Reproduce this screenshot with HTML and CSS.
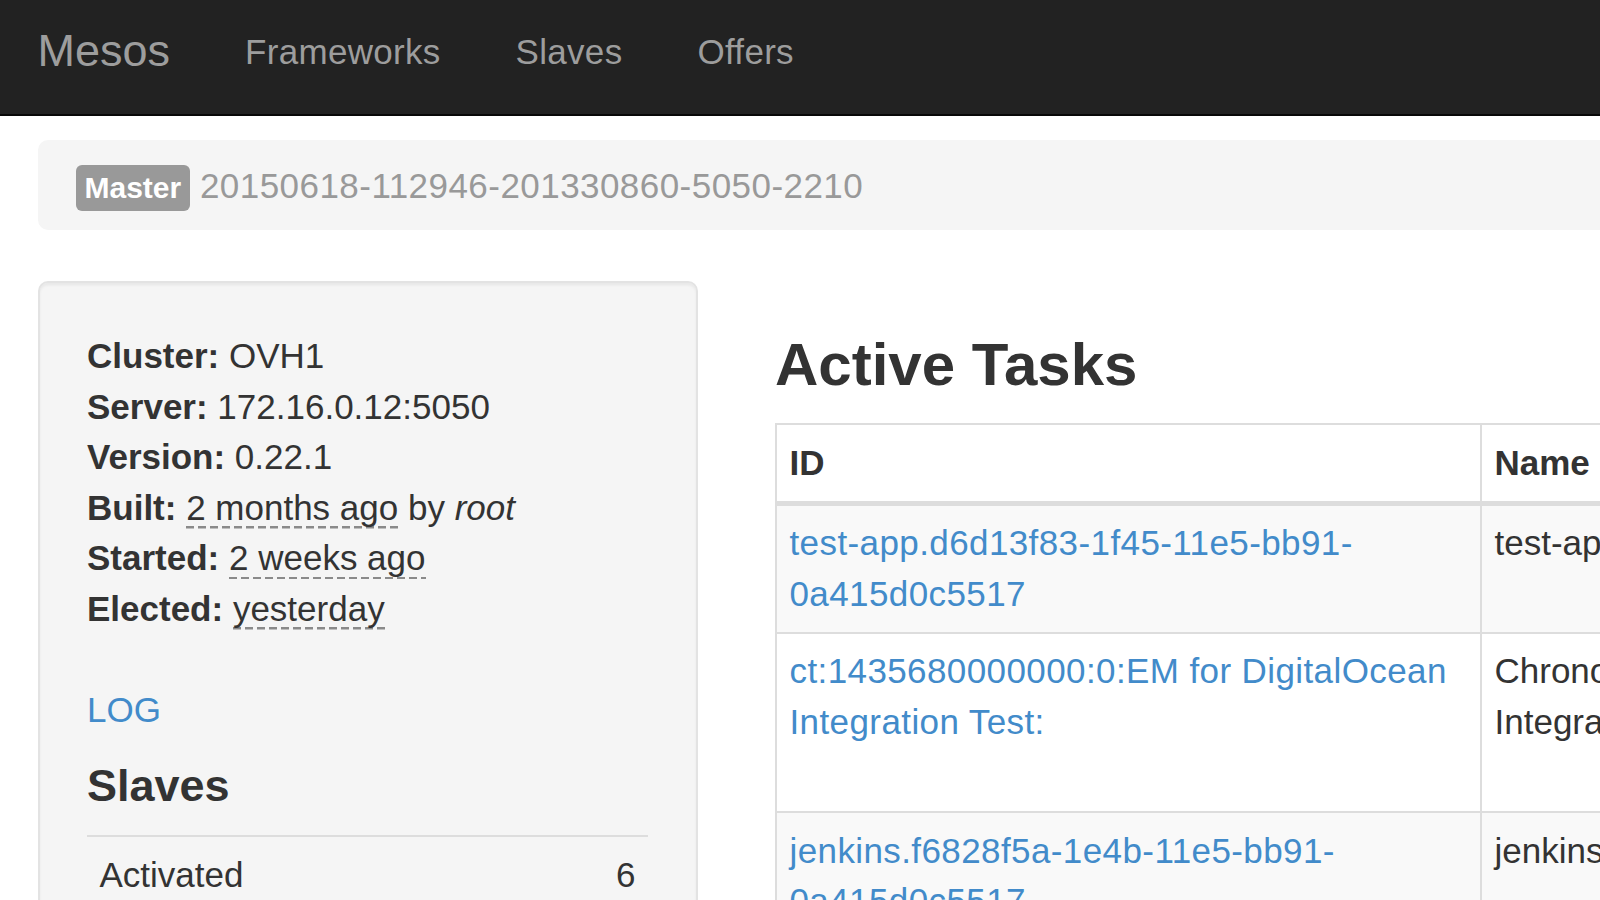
FILE: index.html
```html
<!DOCTYPE html>
<html>
<head>
<meta charset="utf-8">
<title>Mesos</title>
<link rel="stylesheet" href="styles.css">
</head>
<body>
<nav class="navbar">
  <a class="brand" href="#">Mesos</a>
  <ul class="nav">
    <li><a href="#">Frameworks</a></li>
    <li><a href="#">Slaves</a></li>
    <li><a href="#">Offers</a></li>
  </ul>
</nav>
<div class="page">
  <div class="breadcrumb">
    <span class="label">Master</span> <span class="crumb-id">20150618-112946-201330860-5050-2210</span>
  </div>
  <div class="row">
    <div class="side">
      <div class="well">
        <div class="info">
          <div class="info-row"><strong>Cluster:</strong> OVH1</div>
          <div class="info-row"><strong>Server:</strong> 172.16.0.12:5050</div>
          <div class="info-row"><strong>Version:</strong> 0.22.1</div>
          <div class="info-row"><strong>Built:</strong> <abbr class="dash">2 months ago</abbr> by <em>root</em></div>
          <div class="info-row"><strong>Started:</strong> <abbr class="dash">2 weeks ago</abbr></div>
          <div class="info-row"><strong>Elected:</strong> <abbr class="dash">yesterday</abbr></div>
        </div>
        <p class="log"><a href="#">LOG</a></p>
        <h4 class="side-title">Slaves</h4>
        <table class="mini-table">
          <tbody>
            <tr><td>Activated</td><td class="num">6</td></tr>
            <tr><td>Deactivated</td><td class="num">0</td></tr>
          </tbody>
        </table>
      </div>
    </div>
    <div class="main">
      <h3 class="title">Active Tasks</h3>
      <table class="tasks">
        <thead>
          <tr><th class="col-id">ID</th><th class="col-name">Name</th><th>State</th><th>Started</th><th>Host</th></tr>
        </thead>
        <tbody>
          <tr>
            <td><a class="task-link" href="#">test-app.d6d13f83-1f45-11e5-bb91-<wbr>0a415d0c5517</a></td>
            <td>test-app</td><td>RUNNING</td><td>2 weeks ago</td><td>slave-1</td>
          </tr>
          <tr class="tall">
            <td><a class="task-link" href="#">ct:1435680000000:0:EM for DigitalOcean Integration Test:</a></td>
            <td>ChronosTask:EM for DigitalOcean Integration Test:</td><td>RUNNING</td><td>yesterday</td><td>slave-2</td>
          </tr>
          <tr>
            <td><a class="task-link" href="#">jenkins.f6828f5a-1e4b-11e5-bb91-<wbr>0a415d0c5517</a></td>
            <td>jenkins</td><td>RUNNING</td><td>2 weeks ago</td><td>slave-3</td>
          </tr>
        </tbody>
      </table>
    </div>
  </div>
</div>
</body>
</html>
```
FILE: styles.css
```css
html, body {
  margin: 0;
  padding: 0;
  overflow: hidden;
  width: 1600px;
  height: 900px;
  background: #fff;
}
body {
  font-family: "Liberation Sans", Arial, sans-serif;
  font-size: 35px;
  line-height: 50.5px;
  color: #333;
}
a {
  color: #428bca;
  text-decoration: none;
}

.navbar {
  display: flex;
  align-items: flex-start;
  height: 114px;
  background: #222;
  border-bottom: 2px solid #080808;
}
.brand {
  margin-top: 28px;
  padding: 0 37.5px 0 37.5px;
  font-size: 45px;
  line-height: 45px;
  color: #9d9d9d;
}
.nav {
  display: flex;
  margin: 0;
  padding: 0;
  list-style: none;
}
.nav a {
  display: block;
  margin-top: 34px;
  padding: 0 37.5px;
  font-size: 35px;
  line-height: 35px;
  letter-spacing: 0.3px;
  color: #9d9d9d;
}

.page {
  width: 2950px;
  padding: 24px 37.5px 0;
}
.breadcrumb {
  padding: 21px 38px 19px;
  height: 50px;
  background: #f5f5f5;
  border-radius: 10px;
  margin-bottom: 51px;
  white-space: nowrap;
}
.label {
  display: inline-block;
  padding: 8px 9px 7.5px;
  font-size: 30px;
  font-weight: bold;
  line-height: 30px;
  color: #fff;
  background: #999;
  border-radius: 6px;
}
.crumb-id {
  color: #999;
  letter-spacing: 0.45px;
}

.row {
  display: flex;
  align-items: flex-start;
}
.side {
  flex: 0 0 660px;
}
.well {
  box-sizing: border-box;
  width: 660px;
  min-height: 700px;
  padding: 48px 47.5px 47.5px;
  background: #f5f5f5;
  border: 2.5px solid #e3e3e3;
  border-radius: 10px;
  box-shadow: inset 0 2.5px 2.5px rgba(0, 0, 0, 0.05);
}
.info {
  margin-bottom: 51px;
}
.info-row strong {
  font-weight: bold;
}
.dash {
  text-decoration: none;
  padding-bottom: 2px;
  background: repeating-linear-gradient(90deg, #8a8a8a 0 8px, transparent 8px 12px) left bottom / 100% 2.5px no-repeat;
}
.log {
  margin: 0;
}
.side-title {
  margin: 25px 0 25px;
  font-size: 45px;
  line-height: 49.5px;
  font-weight: bold;
}
.mini-table {
  width: 100%;
  border-collapse: collapse;
}
.mini-table td {
  padding: 12.5px;
  border-top: 2.5px solid #ddd;
}
.mini-table .num {
  text-align: right;
}

.main {
  margin-left: 77.5px;
  flex: 0 0 auto;
}
.title {
  margin: 51px 0 25px;
  font-size: 60px;
  line-height: 66px;
  font-weight: bold;
}
.tasks {
  border-collapse: collapse;
  border: 2.5px solid #ddd;
}
.tasks th,
.tasks td {
  padding: 12.5px;
  border: 2.5px solid #ddd;
  text-align: left;
  vertical-align: top;
}
.tasks thead th {
  border-bottom-width: 5px;
  font-weight: bold;
  white-space: nowrap;
}
.tasks .col-id {
  width: 678px;
}
.tasks .col-name {
  width: 600px;
}
.task-link {
  letter-spacing: 0.4px;
}
.tasks tbody tr:nth-child(odd) td {
  background: #f9f9f9;
}
.tasks tr.tall td {
  height: 152.5px;
}
```
